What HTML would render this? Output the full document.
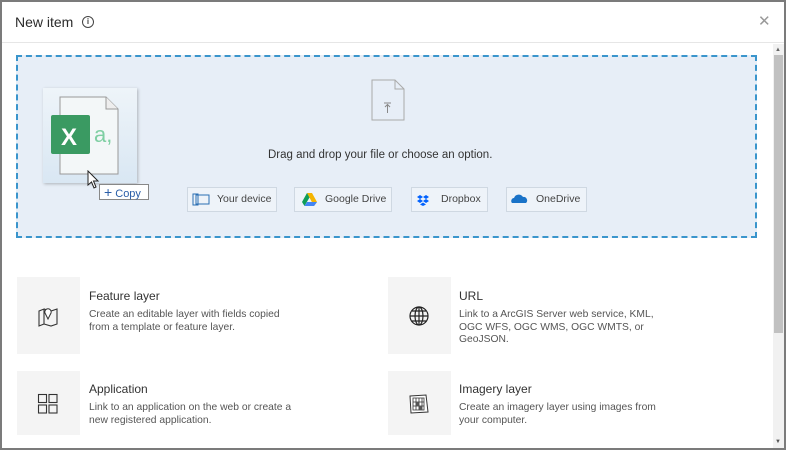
<!DOCTYPE html>
<html><head><meta charset="utf-8"><style>
*{box-sizing:border-box;margin:0;padding:0}
body{width:786px;height:450px;overflow:hidden;background:#fff;font-family:"Liberation Sans",sans-serif;color:#323232;position:relative}
.frame{position:absolute;inset:0;border:2px solid #7b7b7b}
.hdr{position:absolute;left:2px;top:2px;right:2px;height:41px;border-bottom:1px solid #e6e6e6}
.hdr .t{position:absolute;left:13px;top:12px;font-size:14px;color:#2b2b2b}
.hdr .i{position:absolute;left:80px;top:14px;width:12px;height:12px;border:1.2px solid #444;border-radius:50%;font-size:8px;text-align:center;line-height:10px;font-weight:bold;color:#444}
.x{position:absolute;left:758px;top:12px;font-size:15px;color:#999}
.sb{position:absolute;left:773px;top:44px;width:11px;height:404px;background:#f1f1f1}
.th{position:absolute;left:774px;top:55px;width:9px;height:278px;background:#c1c1c1}
.drop{position:absolute;left:16px;top:55px;width:741px;height:183px;background:#e7eef7;border:2px dashed #3a95cc}
.msg{position:absolute;left:268px;top:149px;font-size:11.5px;color:#333}
.btn{position:absolute;top:187px;height:25px;border:1px solid #cfd8e2;background:#eef3f9;font-size:10.5px;color:#444;line-height:23px}
.btn .ic{position:absolute;left:0;top:0;width:26px;height:23px}
.btn span{position:absolute;top:0}
.card .box{position:absolute;width:63px;background:#f4f4f4}
.ct{position:absolute;font-size:12px;color:#333}
.cd{position:absolute;font-size:10.3px;color:#555;line-height:12.5px}
</style></head><body>
<div class="hdr"><div class="t">New item</div><div class="i">i</div></div>
<div class="x">✕</div>
<div class="drop"></div>
<div style="position:absolute;left:43px;top:88px;width:94px;height:95px;background:linear-gradient(#eef4f9,#d9e7f3);box-shadow:1px 1px 3px rgba(0,0,0,.25)"></div>
<svg style="position:absolute;left:50px;top:95px" width="75" height="80"><path d="M10 2 H56 L68 14 V79 H10 Z" fill="#f3f7f8" stroke="#999" stroke-width="1"/><path d="M56 2 V14 H68" fill="#eee" stroke="#999"/><rect x="1" y="20" width="39" height="39" rx="2" fill="#3a9a62"/><text x="11" y="50" font-family="Liberation Sans" font-size="24" font-weight="bold" fill="#fff">X</text><text x="44" y="47" font-family="Liberation Sans" font-size="22" fill="#7fcfa3">a,</text></svg>
<svg style="position:absolute;left:87px;top:170px" width="14" height="20"><path d="M1 1 V15 L4.5 12 L7 18 L9 17 L6.5 11 H11 Z" fill="#fff" stroke="#222" stroke-width="1"/></svg>
<div style="position:absolute;left:99px;top:184px;width:50px;height:16px;background:#fff;border:1px solid #888;font-size:11px;color:#2a5ea8;line-height:14px;padding-left:4px"><b style="font-size:14px;font-weight:normal">+</b> Copy</div>
<svg style="position:absolute;left:371px;top:79px" width="34" height="42"><path d="M1 1 H24 L33 10 V41 H1 Z" fill="none" stroke="#aaa"/><path d="M24 1 V10 H33" fill="none" stroke="#aaa"/><path d="M13 24 H20 M16.5 26 V34 M14 28 L16.5 25.5 L19 28" fill="none" stroke="#888"/></svg>
<div class="msg">Drag and drop your file or choose an option.</div>
<div class="btn" style="left:187px;width:90px"><svg class="ic" width="26" height="23"><rect x="5" y="6" width="5" height="11" fill="none" stroke="#2b6fb4"/><rect x="8" y="7" width="13" height="9" fill="none" stroke="#2b6fb4"/></svg><span style="left:29px">Your device</span></div>
<div class="btn" style="left:294px;width:98px"><svg class="ic" width="26" height="23"><path d="M12 5 L17 5 L22 14 L19 18 Z" fill="#f4b400"/><path d="M12 5 L7 14 L9.5 18 L14.5 9.5Z" fill="#0f9d58"/><path d="M9.5 18 H19 L22 14 H12 Z" fill="#4285f4"/></svg><span style="left:30px">Google Drive</span></div>
<div class="btn" style="left:411px;width:77px"><svg class="ic" width="26" height="23"><g fill="#0061fe"><path d="M8 7 L11 9 L8 11 L5 9Z"/><path d="M14 7 L17 9 L14 11 L11 9Z"/><path d="M8 11 L11 13 L8 15 L5 13Z"/><path d="M14 11 L17 13 L14 15 L11 13Z"/><path d="M11 14.5 L14 16.5 L11 18 L8 16.5Z"/></g></svg><span style="left:29px">Dropbox</span></div>
<div class="btn" style="left:506px;width:81px"><svg class="ic" width="26" height="23"><path d="M5 15 a3 3 0 0 1 2-5 a5 5 0 0 1 9-1 a3.5 3.5 0 0 1 3 6Z" fill="#1a73c8"/></svg><span style="left:29px">OneDrive</span></div>
<div class="card"><div class="box" style="left:17px;top:277px;height:77px"></div>
<svg style="position:absolute;left:36px;top:304px" width="24" height="24"><path d="M3 7 L8 5 L8 20 L3 22Z M8 5 L15 7 L21 5 L21 20 L15 22 L8 20" fill="none" stroke="#333" stroke-width="1.1"/><circle cx="12" cy="8" r="3.2" fill="#fff" stroke="#333"/><path d="M9.5 10 L12 15 L14.5 10" fill="#fff" stroke="#333"/></svg>
<div class="ct" style="left:89px;top:289px">Feature layer</div>
<div class="cd" style="left:89px;top:309px">Create an editable layer with fields copied<br>from a template or feature layer.</div></div>
<div class="card"><div class="box" style="left:388px;top:277px;height:77px"></div>
<svg style="position:absolute;left:408px;top:305px" width="24" height="24"><g fill="none" stroke="#222" stroke-width="1.2"><circle cx="11" cy="11" r="9"/><ellipse cx="11" cy="11" rx="4" ry="9"/><path d="M2 11 H20 M4 6 H18 M4 16 H18 M11 2 V20"/></g></svg>
<div class="ct" style="left:459px;top:289px">URL</div>
<div class="cd" style="left:459px;top:309px">Link to a ArcGIS Server web service, KML,<br>OGC WFS, OGC WMS, OGC WMTS, or<br>GeoJSON.</div></div>
<div class="card"><div class="box" style="left:17px;top:371px;height:64px"></div>
<svg style="position:absolute;left:37px;top:393px" width="24" height="24"><g fill="none" stroke="#333" stroke-width="1.1"><rect x="1.5" y="1.5" width="8" height="8"/><rect x="12" y="1.5" width="8" height="8"/><rect x="1.5" y="12" width="8" height="8"/><rect x="12" y="12" width="8" height="8"/></g></svg>
<div class="ct" style="left:89px;top:382px">Application</div>
<div class="cd" style="left:89px;top:402px">Link to an application on the web or create a<br>new registered application.</div></div>
<div class="card"><div class="box" style="left:388px;top:371px;height:64px"></div>
<svg style="position:absolute;left:408px;top:393px" width="24" height="24"><path d="M2 3 L18 2 L20 19 L3 20Z" fill="#fff" stroke="#333"/><path d="M5 5 H16 V17 H5Z M8 5 V17 M11 5 V17 M14 5 V17 M5 9 H16 M5 13 H16" fill="none" stroke="#333" stroke-width="0.8"/><rect x="8" y="9" width="3" height="4" fill="#555"/><rect x="11" y="13" width="3" height="4" fill="#555"/></svg>
<div class="ct" style="left:459px;top:382px">Imagery layer</div>
<div class="cd" style="left:459px;top:402px">Create an imagery layer using images from<br>your computer.</div></div>
<div class="sb"></div><div class="th"></div>
<div style="position:absolute;left:775px;top:47px;font-size:6px;color:#666">▲</div>
<div style="position:absolute;left:775px;top:439px;font-size:6px;color:#555">▼</div>
<div class="frame"></div>
</body></html>
